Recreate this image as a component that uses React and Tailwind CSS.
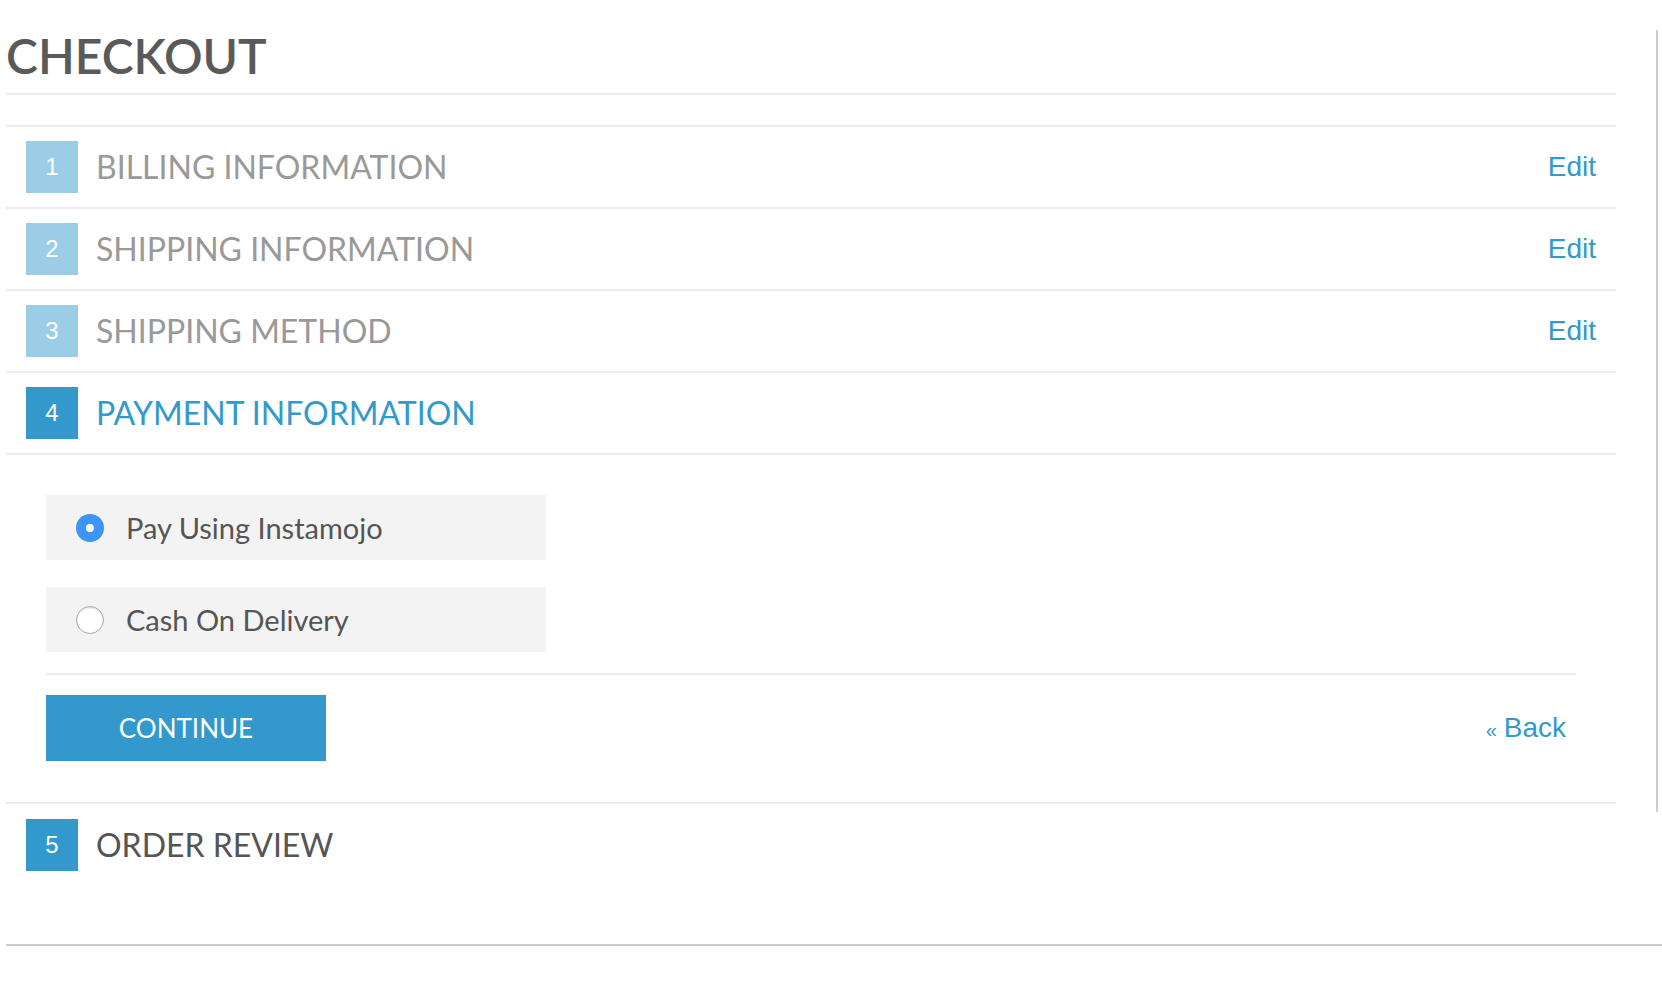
import React from 'react';

const raleway = { fontFamily: 'Lato, "Open Sans", sans-serif' };

const steps = [
  { n: 1, title: 'BILLING INFORMATION', done: true },
  { n: 2, title: 'SHIPPING INFORMATION', done: true },
  { n: 3, title: 'SHIPPING METHOD', done: true },
];

const StepBox = ({ n, light }) => (
  <div
    className={`w-[52px] h-[52px] shrink-0 flex items-center justify-center text-white text-[24px] font-medium font-['Liberation_Sans',sans-serif] ${
      light ? 'bg-[#9bcde6]' : 'bg-[#3399cc]'
    }`}
  >
    {n}
  </div>
);

const Radio = ({ checked }) =>
  checked ? (
    <span className="w-[28px] h-[28px] rounded-full bg-[#3d95f6] flex items-center justify-center shrink-0">
      <span className="w-[8px] h-[8px] rounded-full bg-white" />
    </span>
  ) : (
    <span className="w-[28px] h-[28px] rounded-full bg-white border border-[#aaa] shadow-[inset_0_1px_2px_rgba(0,0,0,0.15)] shrink-0" />
  );

const App = () => {
  return (
    <div className="min-h-screen bg-white pl-[6px]" style={raleway}>
      <div className="flex">
        {/* main column */}
        <div className="w-[1610px] shrink-0">
          <h1 className="pt-[29px] pb-[10px] text-[48px] leading-[54px] font-semibold text-[#5a5a5a]">
            CHECKOUT
          </h1>
          <div className="h-[2px] bg-[#ebebeb] mb-[30px]" />

          <div className="border-t-2 border-[#ebebeb]">
            {steps.map((s) => (
              <div key={s.n} className="h-[82px] border-b-2 border-[#ebebeb] flex items-center pl-[20px] pr-[20px]">
                <StepBox n={s.n} light />
                <span className="ml-[18px] text-[32px] text-[#999] font-normal">{s.title}</span>
                <a className="ml-auto text-[28px] text-[#3399cc] font-['Liberation_Sans',sans-serif]">Edit</a>
              </div>
            ))}

            {/* active step */}
            <div className="h-[82px] border-b-2 border-[#ebebeb] flex items-center pl-[20px]">
              <StepBox n={4} />
              <span className="ml-[18px] text-[32px] text-[#3399cc] font-normal">PAYMENT INFORMATION</span>
            </div>

            <div className="px-[40px] pt-[40px] pb-[41px] border-b-2 border-[#ebebeb]">
              <div className="flex flex-col gap-[27px]">
                <label className="w-[500px] h-[65px] bg-[#f3f3f3] flex items-center pl-[30px] gap-[22px]">
                  <Radio checked />
                  <span className="text-[29px] text-[#555]">Pay Using Instamojo</span>
                </label>
                <label className="w-[500px] h-[65px] bg-[#f3f3f3] flex items-center pl-[30px] gap-[22px]">
                  <Radio />
                  <span className="text-[29px] text-[#555]">Cash On Delivery</span>
                </label>
              </div>
              <div className="h-[2px] bg-[#ebebeb] mt-[21px] mb-[20px]" />
              <div className="flex items-center justify-between">
                <button className="w-[280px] h-[66px] bg-[#3399cc] text-white text-[26px]">CONTINUE</button>
                <a className="mr-[10px] text-[#3399cc] font-['Liberation_Sans',sans-serif] flex items-baseline">
                  <span className="text-[20px] mr-[7px]">«</span>
                  <span className="text-[28px]">Back</span>
                </a>
              </div>
            </div>

            <div className="h-[82px] flex items-center pl-[20px]">
              <StepBox n={5} />
              <span className="ml-[18px] text-[32px] text-[#555] font-normal">ORDER REVIEW</span>
            </div>
          </div>
        </div>

        {/* sidebar edge */}
        <div className="ml-[40px] mt-[30px] h-[782px] flex-1 border-l-2 border-[#cccccc]" />
      </div>

      <div className="mt-[58px] h-[2px] bg-[#cccccc]" />
    </div>
  );
};

export default App;
